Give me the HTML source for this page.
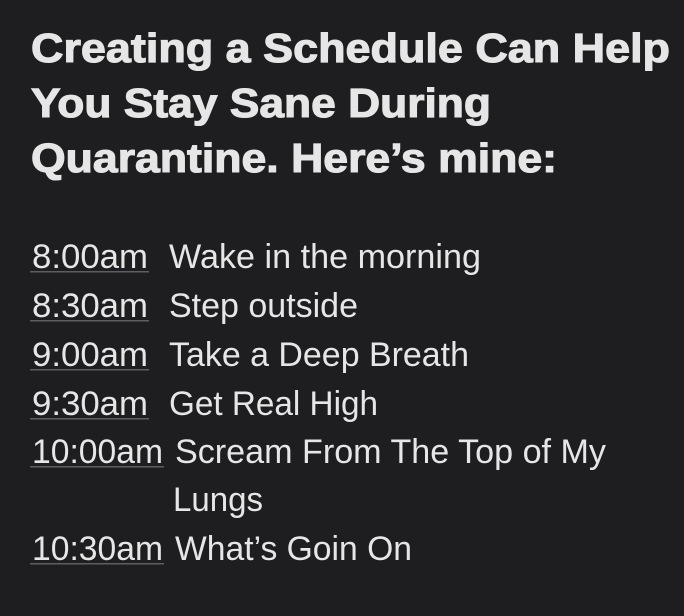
<!DOCTYPE html>
<html><head><meta charset="utf-8"><style>
html,body{margin:0;padding:0;background:#1e1e20;}
svg{display:block}
text{font-family:"Liberation Sans",sans-serif;fill:#e6e6e6}
.t{font-weight:bold;font-size:41px;stroke:#e6e6e6;stroke-width:1.1px}
.b{font-size:34px}
</style></head><body>
<svg width="684" height="616" viewBox="0 0 684 616" xmlns="http://www.w3.org/2000/svg">
<rect width="684" height="616" fill="#1e1e20"/>
<text class="t" x="31" y="62" textLength="639" lengthAdjust="spacingAndGlyphs">Creating a Schedule Can Help</text>
<text class="t" x="31" y="117" textLength="460" lengthAdjust="spacingAndGlyphs">You Stay Sane During</text>
<text class="t" x="31" y="172" textLength="526" lengthAdjust="spacingAndGlyphs">Quarantine. Here’s mine:</text>
<g fill="#5e5e62">
<rect x="30" y="271" width="119" height="1.5"/>
<rect x="30" y="320" width="119" height="1.5"/>
<rect x="30" y="369" width="119" height="1.5"/>
<rect x="30" y="418" width="119" height="1.5"/>
<rect x="30" y="466" width="134" height="1.5"/>
<rect x="30" y="563" width="134" height="1.5"/>
</g>
<text class="b" x="32" y="268" textLength="116" lengthAdjust="spacingAndGlyphs">8:00am</text>
<text class="b" x="169" y="268" textLength="312" lengthAdjust="spacingAndGlyphs">Wake in the morning</text>
<text class="b" x="32" y="317" textLength="116" lengthAdjust="spacingAndGlyphs">8:30am</text>
<text class="b" x="169" y="317" textLength="189" lengthAdjust="spacingAndGlyphs">Step outside</text>
<text class="b" x="32" y="366" textLength="116" lengthAdjust="spacingAndGlyphs">9:00am</text>
<text class="b" x="169" y="366" textLength="300" lengthAdjust="spacingAndGlyphs">Take a Deep Breath</text>
<text class="b" x="32" y="415" textLength="116" lengthAdjust="spacingAndGlyphs">9:30am</text>
<text class="b" x="169" y="415" textLength="209" lengthAdjust="spacingAndGlyphs">Get Real High</text>
<text class="b" x="32" y="463" textLength="131" lengthAdjust="spacingAndGlyphs">10:00am</text>
<text class="b" x="175" y="463" textLength="431" lengthAdjust="spacingAndGlyphs">Scream From The Top of My</text>
<text class="b" x="173" y="511" textLength="90" lengthAdjust="spacingAndGlyphs">Lungs</text>
<text class="b" x="32" y="560" textLength="131" lengthAdjust="spacingAndGlyphs">10:30am</text>
<text class="b" x="175" y="560" textLength="237" lengthAdjust="spacingAndGlyphs">What’s Goin On</text>
</svg>
</body></html>
